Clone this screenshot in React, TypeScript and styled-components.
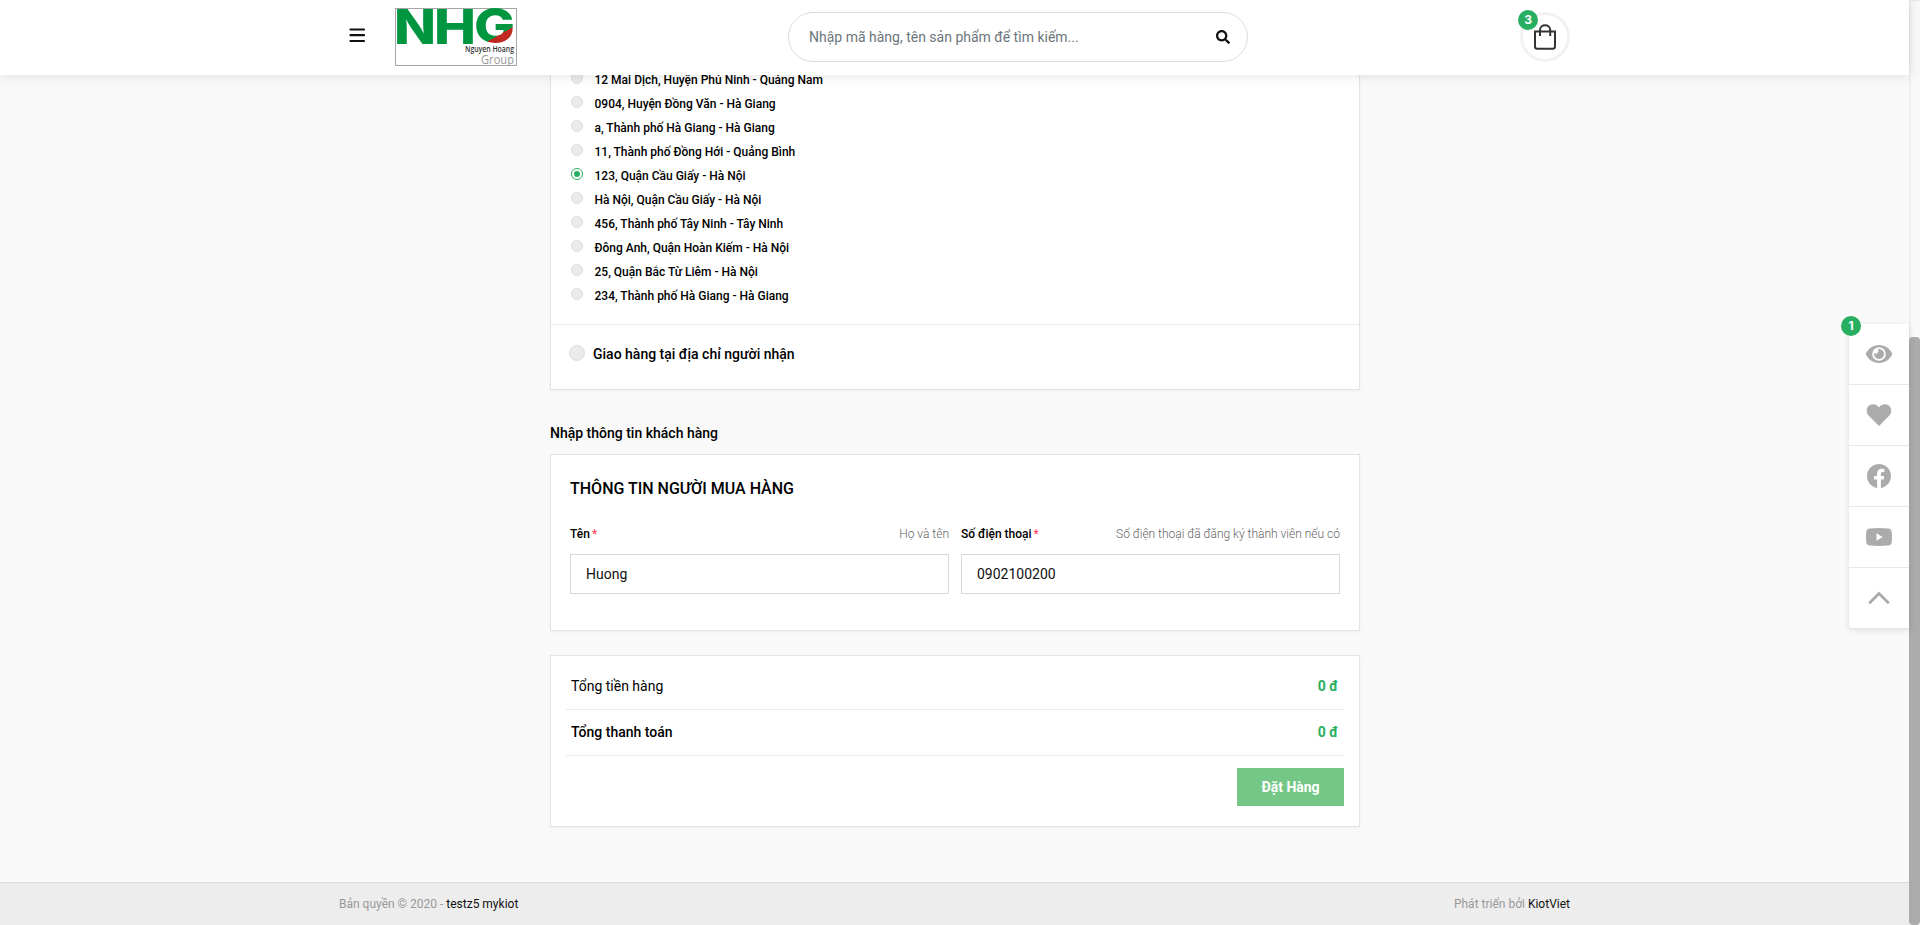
import React from 'react';
import styled, { createGlobalStyle } from 'styled-components';
import { FaSearch } from 'react-icons/fa';

const Global = createGlobalStyle`
  * { box-sizing: border-box; }
  body {
    margin: 0;
    overflow: hidden;
    background: #f9f9f9;
    color: #000;
    font-family: Roboto, "Liberation Sans", sans-serif;
    font-size: 14px;
  }
`;

const Window = styled.div`
  display: flex;
  height: 925px;
  overflow: hidden;
`;

const Page = styled.div`
  position: relative;
  flex: 1;
  display: flex;
  flex-direction: column;
`;

const Track = styled.div`
  width: 11px;
  padding-top: 337px;
  background: #f9f9f9;
  box-shadow: inset 1px 1px 2px #e6e6e6;
`;

const Thumb = styled.div`
  height: 588px;
  border-radius: 4px;
  background: #ababab;
`;

const Header = styled.header`
  position: relative;
  z-index: 2;
  flex: none;
  height: 75px;
  background: #fff;
  box-shadow: 0 0 12px rgba(0, 0, 0, 0.13);
`;

const HeaderInner = styled.div`
  width: 1230px;
  height: 75px;
  margin-left: 340px;
  padding-top: 8px;
  display: flex;
  align-items: flex-start;
`;

const MenuButton = styled.div`
  width: 55px;
  padding: 20px 0 0 9px;
  svg { display: block; }
`;

const LogoLink = styled.div`
  width: 122px;
  height: 58px;
  svg { display: block; }
`;

const Search = styled.div`
  display: flex;
  align-items: center;
  justify-content: space-between;
  width: 460px;
  height: 50px;
  margin: 4px 0 0 271px;
  padding: 0 17px 0 20px;
  border: 1px solid #dcdcdc;
  border-radius: 25px;
  color: #6c757d;
  svg { color: #111; }
`;

const Cart = styled.div`
  position: relative;
  display: flex;
  align-items: center;
  justify-content: center;
  width: 50px;
  height: 50px;
  margin: 4px 0 0 auto;
  border: 3px solid #f2f2f2;
  border-radius: 50%;
`;

const Badge = styled.span<{ $x: number; $y: number }>`
  position: absolute;
  left: ${(p) => p.$x}px;
  top: ${(p) => p.$y}px;
  width: 20px;
  height: 20px;
  border-radius: 50%;
  background: #27ae60;
  color: #fff;
  font: 700 12px/20px Inter, sans-serif;
  text-align: center;
`;

const Main = styled.main`
  width: 810px;
  height: 822px;
  flex: none;
  margin: -15px 0 0 550px;
`;

const Card = styled.section`
  background: #fff;
  border: 1px solid #e3e3e3;
  box-shadow: 0 1px 3px rgba(0, 0, 0, 0.04);
`;

const AddressCard = styled(Card)`
  height: 330px;
  padding-top: 7px;
`;

const AddressList = styled.div`
  height: 257px;
  padding-left: 20px;
  border-bottom: 1px solid #ebebeb;
`;

const AddressRow = styled.div`
  display: flex;
  align-items: center;
  height: 24px;
  font-size: 12px;
  font-weight: 500;
`;

const Radio = styled.span<{ $size: number; $on?: boolean }>`
  display: flex;
  align-items: center;
  justify-content: center;
  width: ${(p) => p.$size}px;
  height: ${(p) => p.$size}px;
  margin: ${(p) => (p.$size === 12 ? '0 11.5px 4px 0' : '0 8px 2px 0')};
  border: 1px solid ${(p) => (p.$on ? '#27ae60' : '#dedede')};
  border-radius: 50%;
  background: ${(p) => (p.$on ? '#fff' : '#ebebeb')};
  &::after {
    content: '';
    width: 6px;
    height: 6px;
    border-radius: 50%;
    background: ${(p) => (p.$on ? '#27ae60' : 'transparent')};
  }
`;

const DeliverRow = styled.div`
  display: flex;
  align-items: center;
  height: 58px;
  padding-left: 18px;
  font-weight: 500;
`;

const SectionTitle = styled.h2`
  margin: 33px 0 11px;
  font-size: 14px;
  line-height: 20px;
  font-weight: 500;
`;

const BuyerCard = styled(Card)`
  height: 177px;
  padding: 23px 19px 0;
`;

const BuyerTitle = styled.h3`
  margin: 0;
  font-size: 16px;
  line-height: 22px;
  font-weight: 500;
`;

const Fields = styled.div`
  display: grid;
  grid-template-columns: 1fr 1fr;
  gap: 12px;
  margin-top: 24px;
`;

const FieldHead = styled.div`
  display: flex;
  justify-content: space-between;
  height: 30px;
  font-size: 12px;
  line-height: 20px;
`;

const Label = styled.span`
  font-weight: 500;
`;

const Star = styled.span`
  margin-left: 2px;
  color: #ff3b4e;
  font-weight: 400;
`;

const Hint = styled.span`
  color: #666;
  font-weight: 300;
`;

const Input = styled.div`
  height: 40px;
  padding-left: 15px;
  border: 1px solid #d9d9d9;
  line-height: 38px;
  color: #111;
`;

const TotalCard = styled(Card)`
  display: flex;
  flex-direction: column;
  height: 172px;
  margin-top: 24px;
  padding: 8px 15px 0;
`;

const TotalRow = styled.div<{ $strong?: boolean }>`
  display: flex;
  justify-content: space-between;
  height: 46px;
  padding: 0 6px 0 5px;
  border-bottom: 1px solid #ebebeb;
  line-height: 44px;
  font-weight: ${(p) => (p.$strong ? 500 : 400)};
`;

const Amount = styled.span`
  color: #27ae60;
  font-weight: 700;
`;

const OrderButton = styled.div`
  align-self: flex-end;
  width: 107px;
  height: 38px;
  margin-top: 12px;
  background: #75c787;
  color: #fff;
  font-weight: 700;
  line-height: 38px;
  text-align: center;
`;

const Footer = styled.footer`
  display: flex;
  justify-content: space-between;
  height: 43px;
  padding: 11px 339px 0;
  border-top: 1px solid #d9d9d9;
  background: #ededed;
  color: #999;
  font-size: 12px;
  line-height: 20px;
`;

const FooterName = styled.span`
  color: #111;
`;

const SideBar = styled.aside`
  position: absolute;
  z-index: 1;
  right: 0;
  top: 324px;
  width: 60px;
  border-radius: 4px 0 0 4px;
  background: #fff;
  box-shadow: 0 2px 6px rgba(0, 0, 0, 0.12);
`;

const SideItem = styled.div`
  display: flex;
  align-items: center;
  justify-content: center;
  height: 61px;
  border-bottom: 1px solid #e8e8e8;
  &:last-child { height: 60px; border-bottom: 0; }
`;

const Logo = () => (
  <svg width="122" height="58" viewBox="0 0 122 58">
    <defs>
      <linearGradient id="gfill" gradientUnits="userSpaceOnUse" x1="94" y1="9.6" x2="114" y2="44.4">
        <stop offset="0.5" stopColor="#009640" />
        <stop offset="0.5" stopColor="#c02822" />
      </linearGradient>
    </defs>
    <rect x="0.5" y="0.5" width="121" height="57" fill="#fff" stroke="#a5a5a5" />
    <g fontFamily="Inter, sans-serif" fontWeight="800" fontSize="48" fill="#009640">
      <text x="-1" y="35.500" textLength="42" lengthAdjust="spacingAndGlyphs">N</text>
      <text x="39" y="35.500" textLength="42" lengthAdjust="spacingAndGlyphs">H</text>
      <text x="79" y="35" textLength="41" lengthAdjust="spacingAndGlyphs" fill="url(#gfill)">G</text>
    </g>
    <text x="70" y="44" fontFamily="Open Sans, sans-serif" fontWeight="600" fontSize="9.5" fill="#333" textLength="49" lengthAdjust="spacingAndGlyphs">Nguyen Hoang</text>
    <text x="86" y="55.500" fontFamily="Open Sans, sans-serif" fontSize="13.5" fill="#999" textLength="33" lengthAdjust="spacingAndGlyphs">Group</text>
  </svg>
);

const Bars = () => (
  <svg width="17" height="15" viewBox="0 0 17 15" stroke="#111" strokeWidth="2.200" strokeLinecap="round">
    <path d="M1.500 1.500H15M1.500 7.200H15M1.500 13H15" />
  </svg>
);

const Bag = () => (
  <svg width="22" height="26" viewBox="0 0 22 26" fill="none" stroke="#333" strokeWidth="2">
    <path d="M1 7.500H21V22.500Q21 24.700 18.800 24.700H3.200Q1 24.700 1 22.500Z" />
    <path d="M6 12V6C6 -0.300 16.200 -0.300 16.200 6V12" />
  </svg>
);

const grey = '#ababab';

const Eye = () => (
  <svg width="28" height="20" viewBox="0 0 28 20">
    <path fill={grey} d="M14 1C7.800 1 3 4.800.6 10 3 15.200 7.800 19 14 19S25 15.200 27.400 10C25 4.800 20.200 1 14 1Z" />
    <circle cx="14" cy="10" r="6.800" fill="#fff" />
    <path fill={grey} d="M14 5A5 5 0 1 1 9.200 8.800 2.300 2.300 0 0 0 12.700 5.200 5 5 0 0 1 14 5Z" />
  </svg>
);

const Heart = () => (
  <svg width="26" height="24" viewBox="0 0 26 24">
    <path fill={grey} d="M13 23 2.600 12.600C-.8 9 .4 1.500 7 1.300 9.800 1.200 11.800 2.600 13 4.400 14.200 2.600 16.200 1.200 19 1.300 25.600 1.500 26.800 9 23.400 12.600Z" />
  </svg>
);

const Facebook = () => (
  <svg width="24" height="24" viewBox="0 0 24 24">
    <path fill={grey} d="M24 12.070C24 5.400 18.630 0 12 0S0 5.400 0 12.070c0 6.030 4.390 11.030 10.130 11.930v-8.440H7.080v-3.490h3.050V9.410c0-3.020 1.790-4.690 4.530-4.690 1.310 0 2.690.24 2.690.24v2.970h-1.520c-1.490 0-1.950.93-1.950 1.880v2.260h3.320l-.53 3.490h-2.790V24C19.610 23.100 24 18.100 24 12.070Z" />
  </svg>
);

const Youtube = () => (
  <svg width="26" height="18" viewBox="0 0 26 18">
    <path fill={grey} d="M4 .4Q13-.3 22 .4 25.500.6 25.700 4 26.200 9 25.700 14 25.500 17.400 22 17.600 13 18.300 4 17.600.5 17.400.3 14-.2 9 .3 4 .5.600 4 .4Z" />
    <path fill="#fff" d="M10.500 5.300 16.700 9 10.500 12.700Z" />
  </svg>
);

const Up = () => (
  <svg width="22" height="14" viewBox="0 0 22 14">
    <path d="M1.200 12.200 11 2.500 20.800 12.200" fill="none" stroke={grey} strokeWidth="2.800" />
  </svg>
);

const addresses = [
  '12 Mai Dịch, Huyện Phú Ninh - Quảng Nam',
  '0904, Huyện Đồng Văn - Hà Giang',
  'a, Thành phố Hà Giang - Hà Giang',
  '11, Thành phố Đồng Hới - Quảng Bình',
  '123, Quận Cầu Giấy - Hà Nội',
  'Hà Nội, Quận Cầu Giấy - Hà Nội',
  '456, Thành phố Tây Ninh - Tây Ninh',
  'Đông Anh, Quận Hoàn Kiếm - Hà Nội',
  '25, Quận Bắc Từ Liêm - Hà Nội',
  '234, Thành phố Hà Giang - Hà Giang',
];

const fields = [
  { label: 'Tên', hint: 'Họ và tên', value: 'Huong' },
  { label: 'Số điện thoại', hint: 'Số điện thoại đã đăng ký thành viên nếu có', value: '0902100200' },
];

export default function App() {
  return (
    <>
      <Global />
      <Window>
        <Page>
          <Header>
            <HeaderInner>
              <MenuButton><Bars /></MenuButton>
              <LogoLink><Logo /></LogoLink>
              <Search>
                <span>Nhập mã hàng, tên sản phẩm để tìm kiếm...</span>
                <FaSearch size={14} />
              </Search>
              <Cart>
                <Bag />
                <Badge $x={-5} $y={-5}>3</Badge>
              </Cart>
            </HeaderInner>
          </Header>
          <Main>
            <AddressCard>
              <AddressList>
                {addresses.map((a, i) => (
                  <AddressRow key={a}>
                    <Radio $size={12} $on={i === 4} />
                    {a}
                  </AddressRow>
                ))}
              </AddressList>
              <DeliverRow>
                <Radio $size={16} />
                Giao hàng tại địa chỉ người nhận
              </DeliverRow>
            </AddressCard>
            <SectionTitle>Nhập thông tin khách hàng</SectionTitle>
            <BuyerCard>
              <BuyerTitle>THÔNG TIN NGƯỜI MUA HÀNG</BuyerTitle>
              <Fields>
                {fields.map((f) => (
                  <div key={f.label}>
                    <FieldHead>
                      <Label>{f.label}<Star>*</Star></Label>
                      <Hint>{f.hint}</Hint>
                    </FieldHead>
                    <Input>{f.value}</Input>
                  </div>
                ))}
              </Fields>
            </BuyerCard>
            <TotalCard>
              <TotalRow><span>Tổng tiền hàng</span><Amount>0 đ</Amount></TotalRow>
              <TotalRow $strong><span>Tổng thanh toán</span><Amount>0 đ</Amount></TotalRow>
              <OrderButton>Đặt Hàng</OrderButton>
            </TotalCard>
          </Main>
          <Footer>
            <span>Bản quyền © 2020 - <FooterName>testz5 mykiot</FooterName></span>
            <span>Phát triển bởi <FooterName>KiotViet</FooterName></span>
          </Footer>
          <SideBar>
            <Badge $x={-8} $y={-8}>1</Badge>
            <SideItem><Eye /></SideItem>
            <SideItem><Heart /></SideItem>
            <SideItem><Facebook /></SideItem>
            <SideItem><Youtube /></SideItem>
            <SideItem><Up /></SideItem>
          </SideBar>
        </Page>
        <Track><Thumb /></Track>
      </Window>
    </>
  );
}
